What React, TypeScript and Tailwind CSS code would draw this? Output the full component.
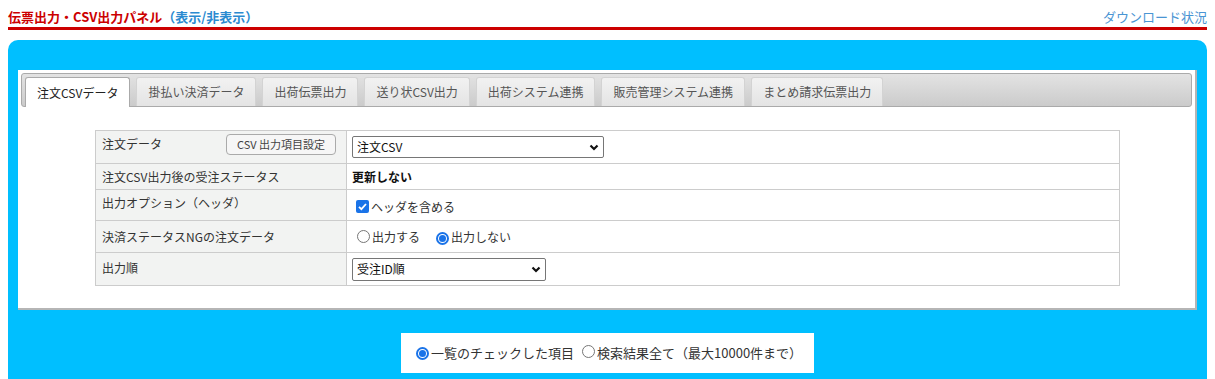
import React from "react";

const tabs = ["注文CSVデータ", "掛払い決済データ", "出荷伝票出力", "送り状CSV出力", "出荷システム連携", "販売管理システム連携", "まとめ請求伝票出力"];

function Chevron() {
  return (
    <svg width="10" height="7" viewBox="0 0 10 7" className="shrink-0">
      <path d="M1.5 1.5 L5 5 L8.5 1.5" fill="none" stroke="#111" strokeWidth="2.2" />
    </svg>
  );
}

function Radio({ on }: { on?: boolean }) {
  return on ? (
    <span className="inline-flex h-[13px] w-[13px] shrink-0 items-center justify-center rounded-full border-2 border-[#1a73e8] bg-white">
      <span className="h-[7px] w-[7px] rounded-full bg-[#1a73e8]" />
    </span>
  ) : (
    <span className="inline-block h-[13px] w-[13px] shrink-0 rounded-full border border-[#767676] bg-white" />
  );
}

export default function App() {
  return (
    <div className="w-[1215px] h-[379px] overflow-hidden bg-white text-[12px] text-[#333] font-['Noto_Sans_CJK_JP','Noto_Sans',sans-serif]">
      <div className="mx-2 flex h-[27px] items-end justify-between pb-[4px]">
        <div className="text-[13px] font-bold leading-none text-[#cc0000]">
          伝票出力・CSV出力パネル<span className="text-[#2b8ad0]">（表示/非表示）</span>
        </div>
        <div className="text-[13px] leading-none text-[#4a95d3]">ダウンロード状況</div>
      </div>
      <div className="mx-2 h-[3px] bg-[#cc0000]" />
      <div className="mx-2 mt-[10px] rounded-t-[10px] bg-[#00bfff] px-[10px] pt-[30px] pb-[10px]">
        <div className="h-[240px] border-b-2 border-r-2 border-[#b5b5b5] bg-white px-[3px] pt-[3px]">
          <div className="flex h-[34px] items-end gap-[6px] rounded-[3px] border border-[#aaa] bg-gradient-to-b from-[#e3e3e3] to-[#cbcbcb] pl-[3px]">
            {tabs.map((t, i) => (
              <div
                key={t}
                className={
                  i === 0
                    ? "relative -mb-px flex h-[30px] items-center rounded-t-[3px] border border-b-0 border-[#aaa] bg-white px-[11px] text-[#222]"
                    : "flex h-[29px] items-center rounded-t-[3px] border border-b-0 border-[#d3d3d3] bg-gradient-to-b from-[#f2f2f2] to-[#e4e4e4] px-[11px] text-[#555]"
                }
              >
                {t}
              </div>
            ))}
          </div>
          <div className="ml-[74px] mt-[23px] w-[1025px]">
            <table className="w-full border-collapse border border-[#ccc]">
              <tbody>
                <tr className="h-[33px]">
                  <td className="w-[251px] border border-[#ccc] bg-[#f2f3f2] px-[6px] align-top">
                    <div className="flex items-start justify-between pt-[4px]">
                      <span>注文データ</span>
                      <span className="mr-[4px] -mt-[1px] flex h-[21px] items-center rounded-[4px] border border-[#aaa] bg-[#f6f6f6] px-[10px] text-[11px] text-[#444]">CSV 出力項目設定</span>
                    </div>
                  </td>
                  <td className="border border-[#ccc] px-[5px]">
                    <div className="flex h-[22px] w-[252px] items-center justify-between rounded-[2px] border border-[#767676] px-[4px] text-[#111]">
                      <span>注文CSV</span>
                      <Chevron />
                    </div>
                  </td>
                </tr>
                <tr className="h-[26px]">
                  <td className="border border-[#ccc] bg-[#f2f3f2] px-[6px]">注文CSV出力後の受注ステータス</td>
                  <td className="border border-[#ccc] px-[5px] font-bold text-[#111]">更新しない</td>
                </tr>
                <tr className="h-[31px]">
                  <td className="border border-[#ccc] bg-[#f2f3f2] px-[6px] align-top pt-[4px]">出力オプション（ヘッダ）</td>
                  <td className="border border-[#ccc] px-[9px] pt-[3px]">
                    <span className="flex items-center gap-[2px]">
                      <span className="flex h-[13px] w-[13px] items-center justify-center rounded-[2px] bg-[#1a73e8]">
                        <svg width="11" height="11" viewBox="0 0 11 11">
                          <path d="M2 5.8 L4.4 8.2 L9 3" fill="none" stroke="#fff" strokeWidth="1.8" />
                        </svg>
                      </span>
                      ヘッダを含める
                    </span>
                  </td>
                </tr>
                <tr className="h-[32px]">
                  <td className="border border-[#ccc] bg-[#f2f3f2] px-[6px]">決済ステータスNGの注文データ</td>
                  <td className="border border-[#ccc] px-[10px]">
                    <span className="flex items-center">
                      <Radio />
                      <span className="ml-[2px]">出力する</span>
                      <span className="ml-[16px]"><Radio on /></span>
                      <span className="ml-[2px]">出力しない</span>
                    </span>
                  </td>
                </tr>
                <tr className="h-[33px]">
                  <td className="border border-[#ccc] bg-[#f2f3f2] px-[6px] align-top pt-[6px]">出力順</td>
                  <td className="border border-[#ccc] px-[5px]">
                    <div className="flex h-[23px] w-[194px] items-center justify-between rounded-[2px] border border-[#767676] px-[4px] text-[#111]">
                      <span>受注ID順</span>
                      <Chevron />
                    </div>
                  </td>
                </tr>
              </tbody>
            </table>
          </div>
        </div>
        <div className="mt-[23px] flex justify-center">
          <div className="flex h-[40px] w-[413px] items-center whitespace-nowrap bg-white px-[15px] text-[13px] text-[#333]">
            <Radio on />
            <span className="ml-[2px] shrink-0">一覧のチェックした項目</span>
            <span className="ml-[8px] shrink-0"><Radio /></span>
            <span className="ml-[2px] shrink-0">検索結果全て（最大10000件まで）</span>
          </div>
        </div>
      </div>
    </div>
  );
}
